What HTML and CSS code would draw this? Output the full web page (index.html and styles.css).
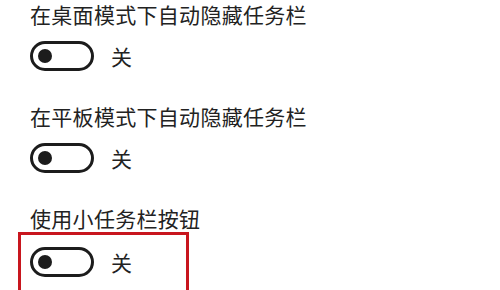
FILE: index.html
```html
<!DOCTYPE html>
<html lang="zh-CN">
<head>
<meta charset="utf-8">
<link rel="stylesheet" href="styles.css">
</head>
<body>
<div class="settings">
  <div class="item">
    <div class="label">在桌面模式下自动隐藏任务栏</div>
    <div class="row">
      <span class="toggle"><span class="knob"></span></span>
      <span class="state">关</span>
    </div>
  </div>
  <div class="item">
    <div class="label">在平板模式下自动隐藏任务栏</div>
    <div class="row">
      <span class="toggle"><span class="knob"></span></span>
      <span class="state">关</span>
    </div>
  </div>
  <div class="item last">
    <div class="label">使用小任务栏按钮</div>
    <div class="highlight">
      <div class="row">
        <span class="toggle"><span class="knob"></span></span>
        <span class="state">关</span>
      </div>
    </div>
  </div>
</div>
</body>
</html>
```

FILE: styles.css
```css
html, body {
  margin: 0;
  padding: 0;
  background: #fff;
  overflow: hidden;
}
.settings {
  padding: 0 0 0 30px;
  font-family: "Noto Sans CJK SC", "Noto Sans", sans-serif;
  color: #222;
}
.item {
  display: flex;
  flex-direction: column;
  margin-bottom: 31px;
}
.item.last {
  margin-bottom: 0;
}
.label {
  font-size: 21px;
  letter-spacing: 0.3px;
  line-height: 28px;
  height: 28px;
  white-space: nowrap;
}
.row {
  display: flex;
  align-items: center;
  gap: 17px;
  margin-top: 13px;
  height: 30px;
}
.toggle {
  box-sizing: border-box;
  width: 64px;
  height: 30px;
  border: 3px solid #1c1c1c;
  border-radius: 15px;
  display: flex;
  align-items: center;
  padding-left: 5px;
}
.knob {
  width: 14px;
  height: 14px;
  border-radius: 50%;
  background: #1c1c1c;
}
.state {
  font-size: 21px;
  line-height: 28px;
}
.highlight {
  box-sizing: border-box;
  width: 171px;
  height: 61px;
  margin-left: -12px;
  border: 3px solid #c8161e;
  padding: 12px 0 0 9px;
}
.highlight .row {
  margin-top: 0;
}
```
